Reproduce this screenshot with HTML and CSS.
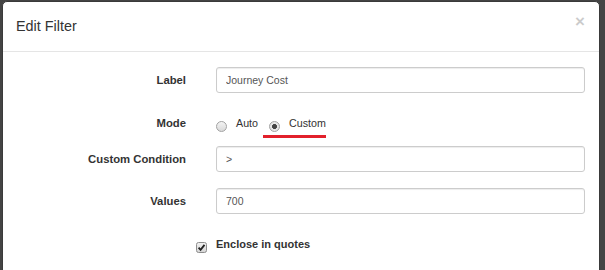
FILE: index.html
```html
<!DOCTYPE html>
<html lang="en">
  <head>
    <meta charset="UTF-8" />
    <title>Edit Filter</title>
    <link rel="stylesheet" href="styles.css">
  </head>
  <body>
    <!-- 모달 -->
    <div class="modal">
      <div class="modal-header">
        <h4 class="modal-title">Edit Filter</h4>
        <button class="close" type="button">&times;</button>
      </div>
      <form class="modal-body">
        <div class="form-group">
          <label class="control-label">Label</label>
          <input class="form-control" type="text" value="Journey Cost">
        </div>
        <div class="form-group mode-group">
          <label class="control-label">Mode</label>
          <div class="radios">
            <label class="radio-inline">
              <input type="radio" name="mode"> Auto
            </label>
            <label class="radio-inline marked">
              <input type="radio" name="mode" checked> Custom
            </label>
          </div>
        </div>
        <div class="form-group">
          <label class="control-label">Custom Condition</label>
          <input class="form-control" type="text" value="&gt;">
        </div>
        <div class="form-group">
          <label class="control-label">Values</label>
          <input class="form-control" type="text" value="700">
        </div>
        <div class="form-group check-group">
          <span></span>
          <label class="checkbox">
            <svg class="check-box" width="11" height="11" viewBox="0 0 11 11">
              <defs>
                <linearGradient id="cbg" x1="0" y1="0" x2="0" y2="1">
                  <stop offset="0" stop-color="#f2f2f2"/>
                  <stop offset="1" stop-color="#d4d4d4"/>
                </linearGradient>
              </defs>
              <rect x="0.5" y="0.5" width="10" height="10" rx="2" fill="url(#cbg)" stroke="#8e8e8e"/>
              <path d="M2.6 5.6 L4.6 7.9 L8.5 2.9" fill="none" stroke="#222" stroke-width="1.8"/>
            </svg>
            Enclose in quotes
          </label>
        </div>
      </form>
    </div>
  </body>
</html>
```

FILE: styles.css
```css
html,
body {
  margin: 0;
  padding: 0;
}
body {
  overflow: hidden;
  background-color: #444;
  font-family: "Liberation Sans", Arial, sans-serif;
  color: #333;
}

/* 모달박스 */
.modal {
  margin: 1px 5px 0 2px;
  min-height: 290px;
  background-color: #fff;
  border: 1px solid #3a3a3a;
  border-radius: 5px;
}
.modal-header {
  display: flex;
  justify-content: space-between;
  align-items: flex-start;
  padding: 14px 14px 14px 13px;
  border-bottom: 1px solid #e5e5e5;
}
.modal-title {
  margin: 0;
  font-size: 14.4px;
  font-weight: normal;
  line-height: 21px;
}
.close {
  margin-top: -3px;
  padding: 0;
  border: 0;
  background: none;
  font-family: inherit;
  font-size: 17px;
  font-weight: bold;
  line-height: 17px;
  color: #000;
  opacity: .2;
}

/* 폼영역 */
.modal-body {
  margin: 0;
  padding: 15px 14px 0 15px;
}
.form-group {
  display: grid;
  grid-template-columns: 168px 1fr;
  column-gap: 30px;
  align-items: center;
  margin-bottom: 16px;
}
.control-label {
  text-align: right;
  font-size: 11.3px;
  font-weight: bold;
}
.form-control {
  box-sizing: border-box;
  height: 26px;
  margin: 0;
  padding: 0 9px;
  border: 1px solid #ccc;
  border-radius: 3px;
  box-shadow: inset 0 1px 1px rgba(0, 0, 0, .075);
  font-family: inherit;
  font-size: 10.5px;
  color: #555;
}

/* 라디오 */
.mode-group {
  height: 28px;
  margin-bottom: 9px;
}
.radios {
  display: flex;
  align-items: center;
}
.radio-inline {
  position: relative;
  display: inline-flex;
  align-items: center;
  gap: 9px;
  font-size: 10.7px;
}
.radio-inline input {
  appearance: none;
  box-sizing: border-box;
  width: 11px;
  height: 11px;
  margin: 6px 0 0;
  border: 1px solid #a2a2a2;
  border-radius: 50%;
  background: linear-gradient(#f4f4f4, #d9d9d9);
}
.radio-inline input:checked {
  background: radial-gradient(circle, #444 0 2.2px, #e6e6e6 2.7px);
}
.radio-inline + .radio-inline {
  margin-left: 5px;
  padding-left: 6px;
}
/* 빨간 밑줄 표시 */
.marked::after {
  content: "";
  position: absolute;
  left: 0;
  right: 0;
  bottom: -6px;
  height: 3px;
  background-color: #e2202b;
}

/* 체크박스 */
.check-group {
  height: 28px;
}
.checkbox {
  display: flex;
  align-items: center;
  gap: 9px;
  font-size: 11px;
  font-weight: bold;
}
.check-box {
  margin: 6px 0 0 -20px;
}
```
